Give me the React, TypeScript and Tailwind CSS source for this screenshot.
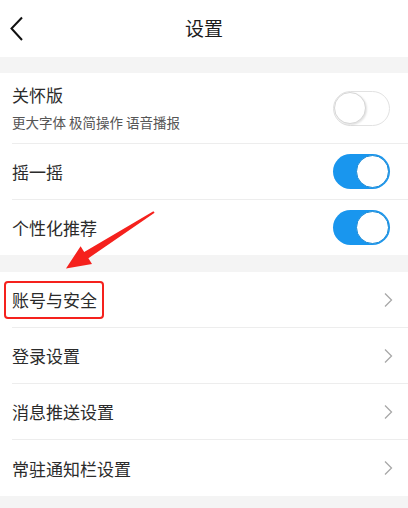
import React from 'react';

const font = { fontFamily: '"Noto Sans CJK SC", "Noto Sans", sans-serif' };

function Toggle({ on }: { on: boolean }) {
  if (on) {
    return (
      <div className="w-[57px] h-[35px] rounded-full bg-[#1996ee] flex items-center justify-end pr-[1px]">
        <div className="w-[33px] h-[33px] rounded-full bg-white border border-[#1a8ad6]" />
      </div>
    );
  }
  return (
    <div className="w-[57px] h-[35px] rounded-full bg-white border-[1.5px] border-[#e2e2e2] flex items-center">
      <div className="w-[32px] h-[32px] rounded-full bg-white border-[1.5px] border-[#d6d6d6] shadow-[1px_1px_2px_rgba(0,0,0,0.12)]" />
    </div>
  );
}

function Chevron() {
  return (
    <svg width="10" height="16" viewBox="0 0 10 16" fill="none" className="mr-[15px]">
      <path d="M2 1.5 L8.5 8 L2 14.5" stroke="#a8a8a8" strokeWidth="1.3" />
    </svg>
  );
}

function LinkRow({ label, last, boxed }: { label: string; last?: boolean; boxed?: boolean }) {
  return (
    <div className="h-[56px] pl-3 bg-white">
      <div className={`h-full flex items-center justify-between ${last ? '' : 'border-b border-[#ededed]'}`}>
        <span className="relative text-[17px] text-[#2b2b2b] leading-none">
          {label}
          {boxed && (
            <span className="absolute left-[-8px] right-[-7px] top-[-10px] bottom-[-11px] border-[2.5px] border-[#f5211d] rounded-[4px]" />
          )}
        </span>
        <Chevron />
      </div>
    </div>
  );
}

export default function App() {
  return (
    <div className="relative w-[408px] h-[508px] bg-[#f4f4f4] overflow-hidden" style={font}>
      {/* header */}
      <div className="relative h-[57px] bg-white flex items-center justify-center">
        <svg width="16" height="26" viewBox="0 0 16 26" fill="none" className="absolute left-[9px] top-[16px]">
          <path d="M13 1.5 L2.5 12.5 L13 24" stroke="#111" strokeWidth="2" />
        </svg>
        <span className="text-[19px] text-[#1c1c1c]">设置</span>
      </div>

      <div className="h-[16px]" />

      {/* toggles */}
      <div className="bg-white pl-3">
        <div className="h-[71px] flex items-center justify-between border-b border-[#ededed] pr-[18px]">
          <div className="flex flex-col">
            <span className="text-[17px] text-[#2b2b2b] leading-none">关怀版</span>
            <span className="text-[13.5px] text-[#555] leading-none mt-[13px]">更大字体 极简操作 语音播报</span>
          </div>
          <Toggle on={false} />
        </div>
        <div className="h-[56px] flex items-center justify-between border-b border-[#ededed] pr-[18px]">
          <span className="text-[17px] text-[#2b2b2b] leading-none">摇一摇</span>
          <Toggle on />
        </div>
        <div className="h-[55px] flex items-center justify-between pr-[18px]">
          <span className="text-[17px] text-[#2b2b2b] leading-none">个性化推荐</span>
          <Toggle on />
        </div>
      </div>

      <div className="h-[17px]" />

      <LinkRow label="账号与安全" boxed />
      <LinkRow label="登录设置" />
      <LinkRow label="消息推送设置" />
      <LinkRow label="常驻通知栏设置" last />

      {/* annotation arrow */}
      <svg width="408" height="508" className="absolute left-0 top-0 pointer-events-none" viewBox="0 0 408 508">
        <polygon
          points="153.4,211.2 154.6,212.8 88.4,258.3 92,264 66,268.5 80.6,246.3 84.2,251.9"
          fill="#f5211d"
        />
      </svg>
    </div>
  );
}
